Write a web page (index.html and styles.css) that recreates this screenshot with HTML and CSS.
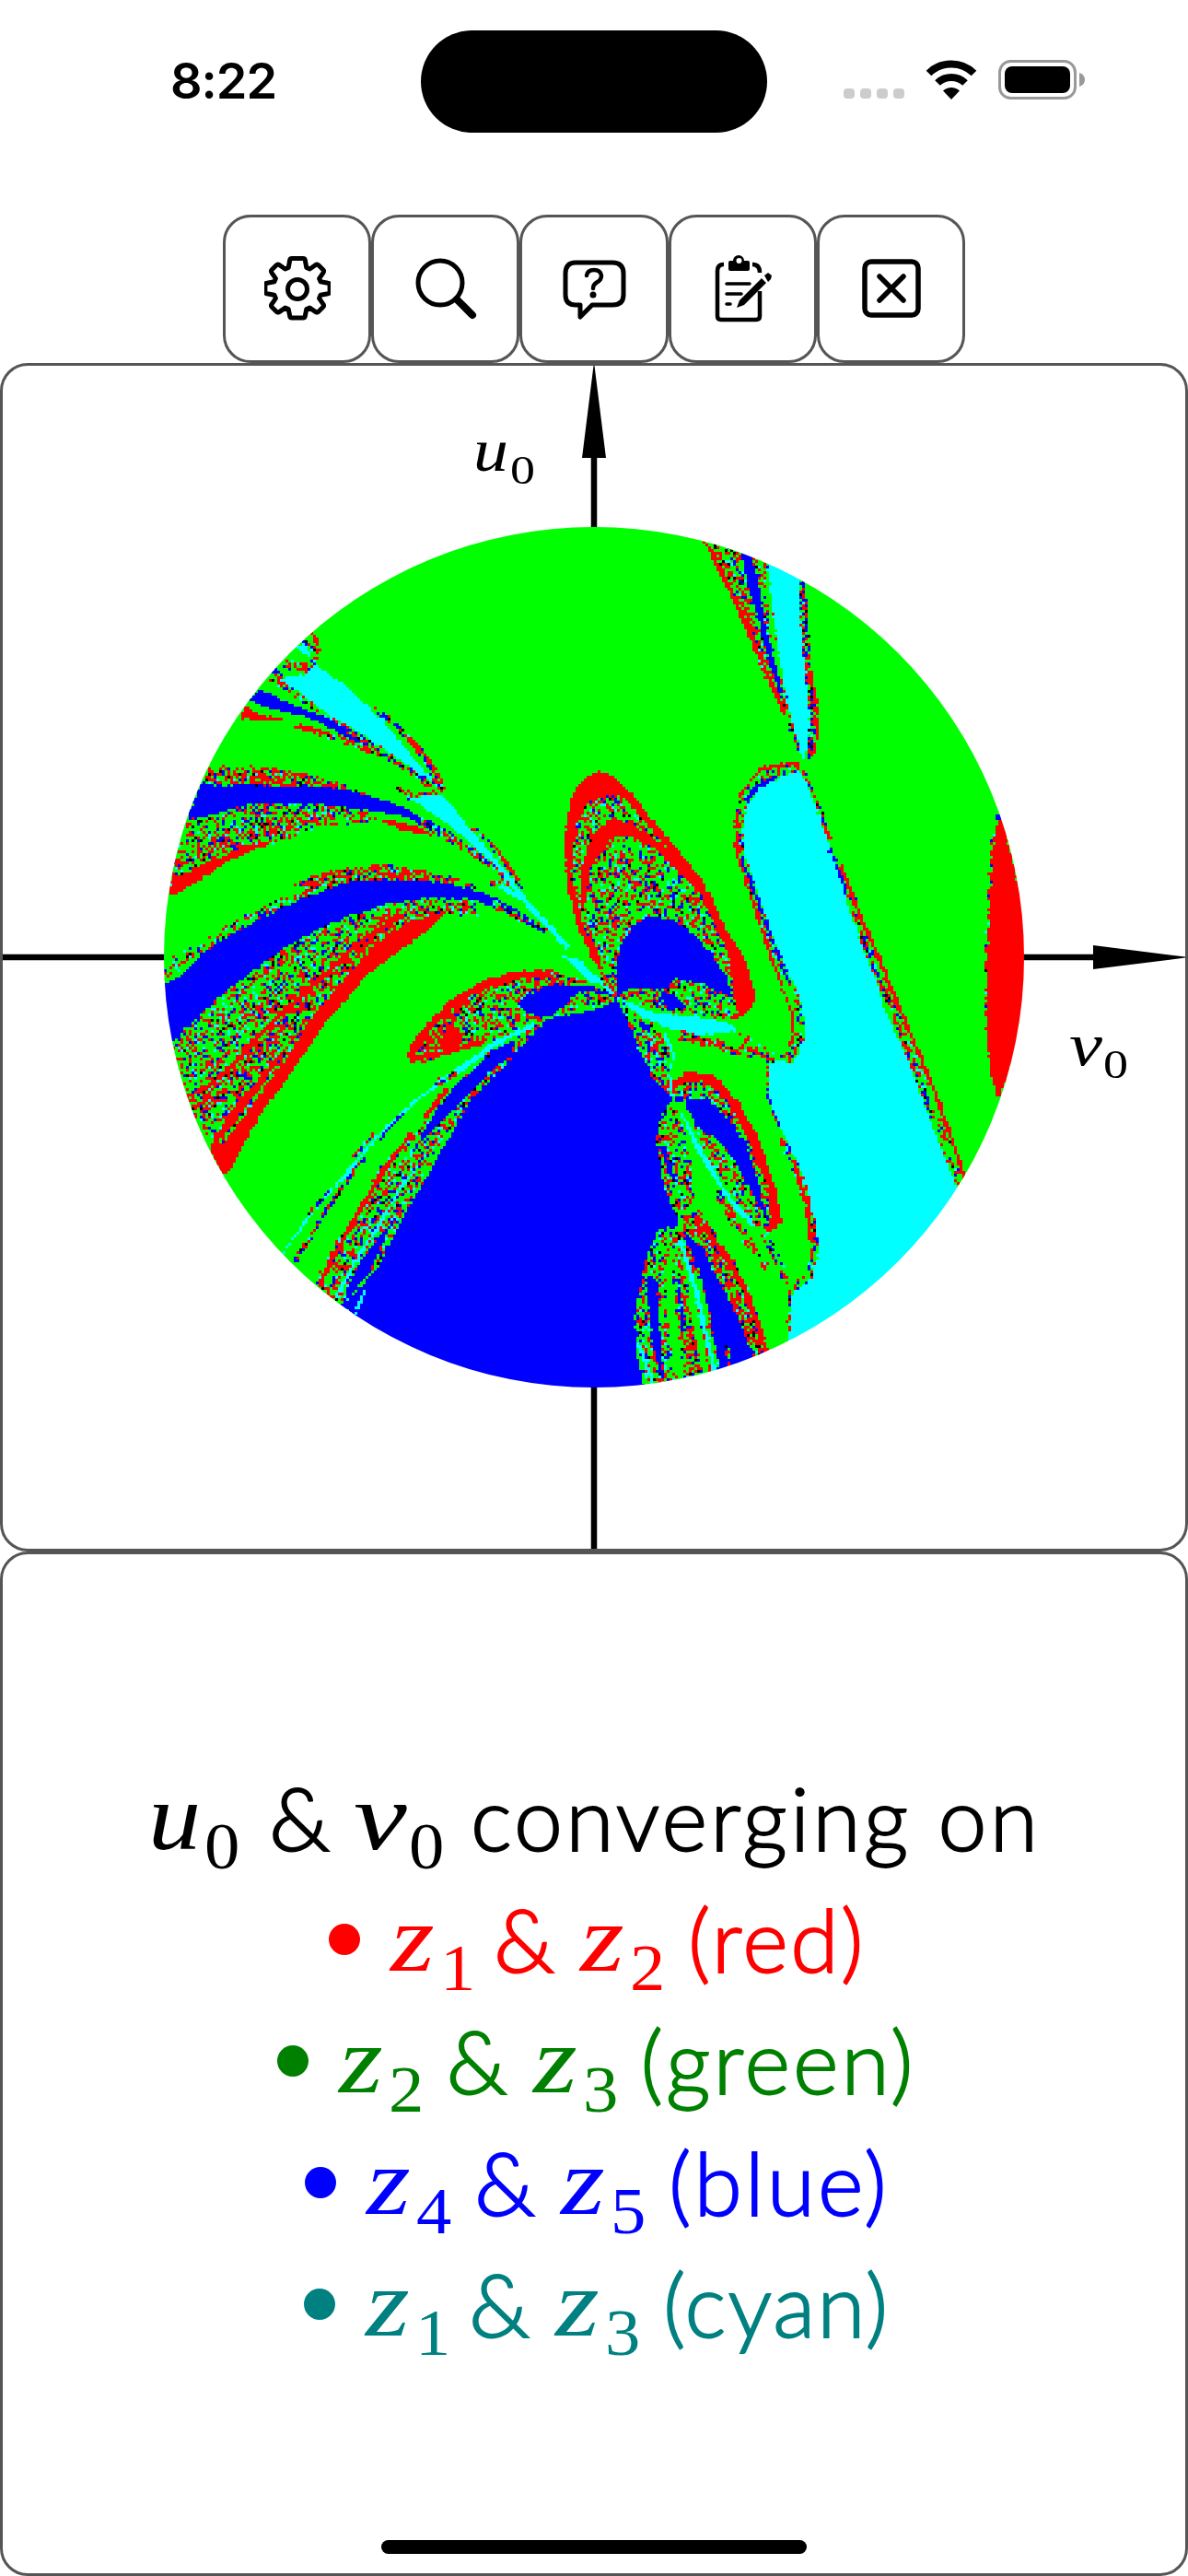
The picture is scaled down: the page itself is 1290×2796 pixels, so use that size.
FILE: index.html
```html
<!DOCTYPE html>
<html lang="en">

<head>
    <meta charset="utf-8">
    <title>Root convergence</title>
    <link rel="stylesheet" href="styles.css">
</head>

<body>
    <header class="status">
        <div class="time">8:22</div>
        <div class="island"></div>
        <div class="signals">
            <div class="dots"><i></i><i></i><i></i><i></i></div>
            <svg class="wifi" viewBox="0 0 58 43">
                <path d="M29 43l-9-9.500a13 13 0 0 1 18 0z" />
                <path d="M4.500 14.500a35 35 0 0 1 49 0M14 25a21.500 21.500 0 0 1 30 0" fill="none" stroke="#000" stroke-width="8" />
            </svg>
            <svg class="battery" viewBox="0 0 94 43">
                <rect x="1.500" y="1.500" width="82" height="40" rx="12" fill="none" stroke="#999" stroke-width="3" />
                <rect x="7" y="7" width="71" height="29" rx="8" />
                <path d="M88 14q6 2 6 7.500t-6 7.500z" fill="#999" />
            </svg>
        </div>
    </header>

    <nav class="toolbar">
        <button class="tool" aria-label="Settings">
            <svg viewBox="0 0 72 72" stroke-width="5">
                <path d="M30 3.500h12q2 0 2.300 2l1.500 8 3.500 1.500 6.500-4.500q1.700-1 3 .3l5 5q1.300 1.300.3 3l-4.500 6.500 1.500 3.500 8 1.500q2 .3 2 2v7.500q0 1.700-2 2l-8 1.500-1.500 3.500 4.500 6.500q1 1.700-.3 3l-5 5q-1.300 1.300-3 .3l-6.500-4.500-3.500 1.500-1.500 7.500q-.3 2-2.300 2H30q-2 0-2.300-2l-1.500-7.500-3.500-1.500-6.500 4.500q-1.700 1-3-.3l-5-5q-1.300-1.300-.3-3l4.500-6.500-1.500-3.500-8-1.500q-2-.3-2-2v-7.500q0-1.700 2-2l8-1.500 1.500-3.500-4.500-6.500q-1-1.700.3-3l5-5q1.300-1.300 3-.3l6.500 4.500 3.500-1.500 1.500-8q.3-2 2.300-2z" />
                <circle cx="36" cy="37" r="10.500" />
            </svg>
        </button>
        <button class="tool" aria-label="Search">
            <svg viewBox="0 0 72 72" stroke-width="5">
                <circle cx="30" cy="30" r="24" />
                <path d="M48 48l17 17" stroke-width="8" />
            </svg>
        </button>
        <button class="tool" aria-label="Help">
            <svg viewBox="0 0 72 72" stroke-width="5">
                <path d="M16 8h40q12 0 12 12v23q0 11-12 11H34L21 67V54h-5Q5 54 5 43V20Q5 8 16 8z" />
                <path d="M28 22q1-6 8-6t8 6q0 5-5 7.500-4 2.500-4 6.500" stroke-width="4.500" />
                <circle cx="35" cy="43" r="3.500" fill="#000" stroke="none" />
            </svg>
        </button>
        <button class="tool notes" aria-label="Notes">
            <svg viewBox="0 0 72 76" stroke-width="4.500">
                <path d="M19 12q-7 0-7 7v49q0 4 4 4h38q4 0 4-4V41M50 12q8 0 8 9" stroke-linecap="butt" />
                <path d="M24 10q0-2 2-2h3a6 6 0 0 1 12 0h4q2 0 2 2v7q0 2-2 2H26q-2 0-2-2z" fill="#000" stroke="none" />
                <circle cx="35.500" cy="8" r="3" fill="#fff" stroke="none" />
                <path d="M22 33h25M22 44h16M22 55h4" stroke-width="3.500" />
                <path d="M33 59l3-8 24-24 5 5-24 24zM63 24l4-3 4 3-1 4-3 3z" fill="#000" stroke="none" />
            </svg>
        </button>
        <button class="tool" aria-label="Close">
            <svg viewBox="0 0 72 72" stroke-width="5.500">
                <rect x="7" y="7" width="58" height="58" rx="7" />
                <path d="M23 23l26 26M49 23L23 49" />
            </svg>
        </button>
    </nav>

    <main>
        <section class="panel plot">
            <svg class="axes" viewBox="0 0 1284 1284">
                <path d="M642 90V1284M0 642h1200" stroke="#000" stroke-width="6.500" />
                <path d="M642-4l13 104h-26zM1288 642l-104 13v-26z" />
                <g class="axis-label">
                    <text x="511" y="114" textLength="38" lengthAdjust="spacingAndGlyphs">u</text>
                    <text class="index" x="551" y="128" textLength="27" lengthAdjust="spacingAndGlyphs">0</text>
                    <text x="1158" y="759" textLength="36" lengthAdjust="spacingAndGlyphs">v</text>
                    <text class="index" x="1195" y="773" textLength="27" lengthAdjust="spacingAndGlyphs">0</text>
                </g>
            </svg>
            <canvas id="disc" class="disc" width="934" height="934"></canvas>
        </section>

        <section class="panel legend">
            <div class="line">
                <div class="term wide"><i class="u">u</i><sub>0</sub></div>
                <div class="amp">&amp;</div>
                <div class="term wide"><i class="v">v</i><sub>0</sub></div>
                <div class="word converging">converging on</div>
            </div>
            <div class="line red">
                <div class="bullet"></div>
                <div class="term one"><i>z</i><sub>1</sub></div>
                <div class="amp">&amp;</div>
                <div class="term"><i>z</i><sub>2</sub></div>
                <div class="word w-red">(red)</div>
            </div>
            <div class="line green">
                <div class="bullet"></div>
                <div class="term"><i>z</i><sub>2</sub></div>
                <div class="amp">&amp;</div>
                <div class="term"><i>z</i><sub>3</sub></div>
                <div class="word w-green">(green)</div>
            </div>
            <div class="line blue">
                <div class="bullet"></div>
                <div class="term"><i>z</i><sub>4</sub></div>
                <div class="amp">&amp;</div>
                <div class="term"><i>z</i><sub>5</sub></div>
                <div class="word w-blue">(blue)</div>
            </div>
            <div class="line cyan">
                <div class="bullet"></div>
                <div class="term one"><i>z</i><sub>1</sub></div>
                <div class="amp">&amp;</div>
                <div class="term"><i>z</i><sub>3</sub></div>
                <div class="word w-cyan">(cyan)</div>
            </div>
            <div class="home"></div>
        </section>
    </main>

    <script src="basins.js"></script>
</body>

</html>
```
FILE: styles.css
```css
* {
    box-sizing: border-box;
}

body {
    margin: 0;
    width: 1290px;
    height: 2796px;
    overflow: hidden;
    display: flex;
    flex-direction: column;
    background: #fff;
    color: #000;
    font-family: Lato, "Open Sans", sans-serif;
}

.status {
    height: 233px;
    flex: none;
    display: flex;
    align-items: flex-start;
    padding-top: 33px;
}

.time {
    width: 457px;
    padding-left: 185px;
    padding-top: 22px;
    font: 600 54px/66px Inter, sans-serif;
    letter-spacing: -1px;
}

.island {
    width: 376px;
    height: 111px;
    border-radius: 56px;
    background: #000;
}

.signals {
    display: flex;
    padding: 32px 0 0 83px;
}

.dots {
    display: flex;
    gap: 6px;
    padding-top: 31px;
    width: 88px;
}

.dots i {
    width: 12px;
    height: 11px;
    border-radius: 4px;
    background: #ccc;
}

.wifi {
    width: 58px;
    height: 43px;
    margin-right: 22px;
}

.battery {
    width: 94px;
    height: 43px;
}

.toolbar {
    height: 161px;
    flex: none;
    display: flex;
    justify-content: center;
}

.tool {
    width: 161.25px;
    height: 161px;
    padding: 0 0 2px;
    display: flex;
    align-items: center;
    justify-content: center;
    background: #fff;
    border: 3px solid #555;
    border-radius: 30px;
}

.tool svg {
    width: 72px;
    height: 72px;
    fill: none;
    stroke: #000;
    stroke-linecap: round;
    stroke-linejoin: round;
}

.notes {
    padding-right: 7px;
}

.notes svg {
    height: 76px;
}

.panel {
    border: 3px solid #555;
    border-radius: 30px;
}

.plot {
    position: relative;
    height: 1290px;
}

.axes {
    display: block;
    width: 1284px;
    height: 1284px;
}

.axis-label {
    font: italic 65px "Liberation Serif", serif;
}

.axis-label .index {
    font-style: normal;
    font-size: 45px;
}

/* disc sits on top of the axes */
.disc {
    position: absolute;
    left: 175px;
    top: 175px;
    border-radius: 50%;
}

.legend {
    position: relative;
    height: 1112px;
    padding-bottom: 8px;
    display: flex;
    flex-direction: column;
    justify-content: center;
    align-items: center;
}

.line {
    display: flex;
    height: 132px;
    font-size: 95px;
    font-weight: 300;
    line-height: 132px;
    white-space: nowrap;
}

.bullet {
    width: 34px;
    height: 34px;
    margin: 50px 33px 0 0;
    border-radius: 50%;
    background: currentColor;
}

.term {
    width: 121px;
    display: flex;
    font-family: "Liberation Serif", serif;
    font-weight: 400;
}

.term.one {
    width: 116px;
}

.term.wide {
    width: 129px;
}

.term i {
    display: block;
    width: 54px;
    font-size: 104px;
    transform: scaleX(1.18);
    transform-origin: left;
}

.term i.u {
    width: 61px;
    margin-left: -6px;
    transform: scaleX(1.1);
}

.term i.v {
    width: 60px;
    margin-left: -2px;
    transform: scaleX(1.25);
}

.term sub {
    font-size: 71px;
    line-height: 132px;
    vertical-align: baseline;
    padding-top: 32px;
    transform: scaleX(1.08);
    transform-origin: left;
}

/* the light cut is too thin, the stroke brings it to a book weight */
.amp,
.word {
    text-indent: -4px;
    -webkit-text-stroke: 1.800px currentColor;
}

.amp {
    width: 90px;
}

.word {
    letter-spacing: 2.500px;
}

.converging {
    width: 608px;
    letter-spacing: 3.200px;
}

.w-red {
    width: 182px;
}

.w-green {
    width: 290px;
    letter-spacing: 3px;
}

.w-blue {
    width: 229px;
    letter-spacing: 3px;
}

.w-cyan {
    width: 236px;
    letter-spacing: 2px;
}

.red {
    color: #f00;
}

.green {
    color: #008000;
}

.blue {
    color: #00f;
}

.cyan {
    color: #008080;
}

.home {
    position: absolute;
    left: 411px;
    bottom: 21px;
    width: 462px;
    height: 15px;
    border-radius: 8px;
    background: #000;
}
```
FILE: basins.js
```javascript
const CELL = 3;
const SIZE = 934;
const canvas = document.getElementById('disc');
const ctx = canvas.getContext('2d');

const COLORS = { r: '#f00', g: '#0f0', b: '#00f', c: '#0ff', k: '#000' };

// mixes for the areas where the basins interleave, one letter per share
const MIXES = {
    n: 'gggggggggggggggrrrrrrrbbbcck',
    N: 'gggggggggrrrrrrrrrrrrbbck',
    e: 'ggggrrrrrbbbbbck'
};

// small seeded generator so that the disc always looks the same
let seed = 12345;
function rand() {
    seed = (seed * 1103515245 + 12345) % 2147483648;
    return (seed >>> 8) / 8388608;
}

function pick(kind) {
    const mix = MIXES[kind];
    return COLORS[mix ? mix[Math.floor(rand() * mix.length) % mix.length] : kind];
}

// tile: [origin x, origin y, units per px in x, units per px in y]
const NW = [-18, -12, 3, 3];
const SW = [-18, 428, 3, 3];
const NE = [422, -12, 2.958, 3];
const SE = [422, 428, 2.958, 3];

// [tile, kind, points] is filled, [tile, kind, points, width] is a line
const SHAPES = [
    // upper left
    [NW, 'c', '510,405 535,465 485,430'],
    [NW, 'r', '537,380 560,430 545,465', 10],
    [NW, 'e', '510,405 548,440 545,480 515,510', 10],
    [NW, 'N', '440,475 490,492 540,485', 26],
    [NW, 'b', '405,510 420,495 440,515 415,520'],
    [NW, 'n', '410,525 480,570 560,625 650,690 750,750 860,820 930,880', 30],
    [NW, 'c', '545,485 640,550 720,620 800,705 860,780 920,850 945,888 900,850 800,780 700,710 600,655 540,610 470,560 430,530 520,515'],
    [NW, 'b', '360,565 420,590 500,625 600,665 700,720 770,770 750,765 690,740 600,695 520,655 430,635 330,600'],
    [NW, 'e', '650,695 750,765 850,825 930,880', 16],
    [NW, 'r', '320,615 345,640 440,660 430,670 300,660'],
    [NW, 'r', '480,685 560,700', 14],
    [NW, 'N', '560,705 660,735 760,785', 18],
    [NW, 'e', '740,630 790,665 850,720 900,780 940,850 960,900', 18],
    [NW, 'r', '850,725 915,790 965,880 955,900', 9],
    [NW, 'N', '205,815 330,815 440,825 550,850 650,880 740,915 640,895 550,885 300,880 185,875'],
    [NW, 'n', '130,985 250,955 340,940 440,935 560,942 700,955 760,990 700,1005 560,1010 490,1040 400,1070 250,1130 140,1190 75,1210 100,1080'],
    [NW, 'N', '90,1140 200,1080 330,1040 480,995 620,990', 34],
    [NW, 'b', '180,865 230,880 300,872 440,880 560,880 650,892 740,915 820,945 900,985 1000,1040 900,1000 800,970 700,955 560,940 440,935 340,940 250,960 180,980 125,985'],
    [NW, 'r', '68,1240 80,1180 160,1145 240,1110 330,1070 430,1050 350,1085 240,1140 150,1200'],
    [NW, 'r', '740,985 860,1005 940,1035 920,1042 820,1020'],
    [NW, 'e', '880,985 960,1035 1060,1095 1140,1150 1190,1200', 24],
    [NW, 'N', '815,885 850,910 960,905', 22],
    [NW, 'c', '960,905 1000,955 1060,1030 1120,1100 1180,1170 1250,1265 1330,1350 1380,1410 1360,1400 1290,1330 1210,1240 1140,1150 1060,1070 980,1005 900,950 860,920'],
    [NW, 'e', '1060,1015 1130,1080 1190,1160 1220,1215', 12],
    [NW, 'r', '1145,1100 1205,1180', 9],
    [NW, 'c', '1150,1205 1220,1245 1290,1320 1370,1405', 15],

    // left fans
    [NW, 'N', '465,1200 560,1165 650,1145 780,1135 900,1155 1010,1180 1080,1215 1000,1195 900,1190 750,1195 600,1220'],
    [NW, 'n', '550,1225 430,1270 330,1320 200,1390 100,1450 60,1500', 42],
    [NW, 'n', '110,1680 220,1580 330,1490 440,1410 560,1345 660,1300 780,1265 900,1245 1060,1255 1090,1300 950,1300 860,1360 700,1500 600,1600 440,1760 330,1900 220,2070 130,1890 85,1725'],
    [NW, 'b', '440,1275 560,1225 660,1190 800,1185 940,1190 1060,1215 1150,1250 1210,1290 1280,1330 1180,1290 1060,1248 900,1245 780,1265 660,1300 560,1345 440,1410 330,1490 220,1580 110,1680 75,1720 50,1640 45,1530 110,1495 200,1410 300,1350'],
    [NW, 'e', '1120,1260 1200,1300 1300,1350', 20],
    [NW, 'N', '1120,1190 1150,1205', 20],
    [SW, 'r', '255,830 200,740 290,590 380,500 470,390 560,280 640,190 740,80 850,0 880,-30 980,-30 900,40 800,110 720,170 660,240 590,320 520,420 440,530 360,640 310,740'],
    [SW, 'N', '150,640 290,490 400,365 540,230 700,70 830,-20 950,-50', 48],
    [SW, 'r', '290,455 400,335 540,210 700,60 830,-20', 15],
    [SW, 'r', '120,580 200,535 300,445', 12],
    [SW, 'r', '215,740 300,600 410,465 560,310', 13],
    [SW, 'n', '240,720 340,590 440,450 540,300', 14],

    // leaf left of the centre
    [SW, 'N', '850,455 855,410 900,345 980,265 1060,215 1180,170 1300,160 1400,180 1440,200 1330,205 1230,240 1210,290 1290,320 1250,370 1140,390 1040,405 960,440 890,465'],
    [SW, 'n', '1010,380 1040,290 1180,210 1260,290 1200,360'],
    [SW, 'r', '855,445 880,385 990,270 1080,210 1200,175 1320,168', 22],
    [SW, 'r', '855,448 960,430 1100,390', 18],
    [SW, 'r', '950,395 990,330 1030,380 970,425'],

    // lower left fans
    [SW, 'n', '540,1180 600,1070 680,945 760,800 860,690 960,570 1090,420 1200,330 1290,310 1280,370 1180,460 1110,520 960,720 870,890 740,1140 640,1250'],
    [SW, 'g', '1000,490 1130,400 1010,530 860,700 840,660 930,570'],
    [SW, 'r', '560,1180 630,1050 700,930 770,810 860,690', 15],
    [SW, 'r', '900,640 975,550', 14],
    [SW, 'b', '1300,320 1400,300 1470,280 1530,250 1589,380 1655,510 1710,580 1670,640 1660,730 1685,870 1726,965 1731,990 1665,1010 1624,1100 1614,1180 1589,1280 1594,1400 1624,1530 1460,1550 1100,1500 850,1400 680,1290 632,1250 710,1180 770,1080 830,970 900,850 960,740 1050,590 1180,450 1270,350'],
    [SW, 'b', '1210,370 1180,440 1050,560 960,650 870,740 900,680 1000,540 1120,430'],
    [SW, 'b', '900,870 800,970 700,1100 650,1200 630,1250 700,1180 830,960'],
    [SW, 'n', '1020,615 940,730 880,860 780,1040 735,1140', 18],
    [SW, 'N', '1190,440 1120,490 1060,570', 12],
    [SW, 'c', '1260,335 1130,400 1010,490', 15],
    [SW, 'c', '1000,495 890,570 740,710 650,820 540,940 440,1085', 9],
    [SW, 'e', '1010,495 930,530', 16],
    [SW, 'b', '835,622 755,712', 9],
    [SW, 'e', '735,695 670,770', 12],
    [SW, 'e', '710,770 640,860 590,930 530,1030 475,1115', 13],
    [SW, 'e', '600,870 520,960', 9],
    [SW, 'c', '850,830 770,960 690,1090 610,1230', 9],
    [SW, 'c', '708,1205 675,1285', 9],

    // centre
    [SW, 'c', '1345,110 1410,125 1470,190 1530,240 1450,200'],
    [SW, 'n', '1320,310 1390,245 1450,200 1530,170 1540,250 1480,280'],
    [SW, 'b', '1210,270 1240,235 1330,205 1460,213 1400,235 1330,300 1290,315 1240,300'],
    [SW, 'b', '1400,215 1500,235', 8],
    [SW, 'c', '1400,140 1470,195 1530,245', 13],

    // red loop above the centre
    [NE, 'r', '145,830 100,855 60,920 45,1000 38,1100 50,1220 80,1330 120,1430 150,1480 205,1570 600,1640 655,1580 620,1450 560,1350 510,1240 460,1160 400,1085 330,1000 250,900 200,850'],
    [NE, 'n', '110,930 180,905 230,920 300,1000 370,1080 250,1000 190,985 130,1040 95,1120 85,1240 60,1180 75,1010'],
    [NE, 'n', '70,1180 115,1370', 10],
    [NE, 'n', '190,1050 240,1040 330,1085 420,1170 480,1240 530,1350 570,1440 580,1550 600,1640 400,1630 215,1570 160,1480 100,1280 120,1150'],
    [NE, 'b', '330,1305 390,1320 460,1370 520,1440 560,1500 575,1570 480,1520 390,1505 370,1540 250,1540 210,1560 205,1480 215,1400 260,1330'],
    [NE, 'b', '340,1540 400,1570 430,1600 370,1610'],
    [SE, 'g', '215,250 330,290 480,310 600,320 600,360 360,345'],
    [SE, 'N', '410,370 510,395 560,415 680,430', 32],
    [SE, 'c', '220,255 330,300 450,310 560,330 600,355 480,370 380,350 280,310'],
    [SE, 'n', '590,360 690,430', 24],

    // upper right wedge
    [NE, 'n', '485,80 600,110 690,150 700,250 720,430 745,560 800,780 740,650 690,530 640,400 570,250'],
    [NE, 'N', '510,100 600,270 660,420 700,530', 34],
    [NE, 'b', '605,110 640,125 665,240 690,380 720,500 745,600 700,500 660,330 630,240'],
    [NE, 'g', '690,190 705,380 735,520', 14],
    [NE, 'r', '495,90 570,240 640,400 700,540 750,650', 13],
    [NE, 'c', '695,150 800,200 790,280 805,400 820,540 828,700 805,800 775,690 740,540 720,400 700,250'],
    [NE, 'e', '800,210 808,320 815,440 830,560 838,680 825,790', 22],
    [NE, 'r', '815,480 845,590 850,720 835,780', 9],

    // cyan basin
    [NE, 'c', '790,820 820,880 860,990 900,1100 960,1270 1020,1440 1060,1590 1150,1790 1220,1990 1300,2190 1200,2360 760,2720 755,2560 800,2500 845,2400 830,2250 740,2030 695,1900 695,1770 760,1770 810,1680 780,1560 730,1440 680,1320 630,1180 610,1100 620,950 670,880 740,850'],
    [NE, 'c', '1290,2170 1310,2200 1100,2480 760,2720 900,2300'],
    [NE, 'n', '790,815 680,850 615,920 600,1000 605,1100 655,1260 705,1400 785,1570 800,1680 770,1765 700,1765', 25],
    [NE, 'r', '790,805 670,822 640,860 600,915', 10],
    [NE, 'r', '590,960 590,1090 650,1280 690,1400 770,1620 775,1690 750,1760', 9],
    [NE, 'b', '720,850 660,880 620,930', 14],
    [NE, 'b', '610,1120 650,1230 700,1370 760,1520', 8],
    [NE, 'e', '800,820 860,960 880,1030', 10],
    [NE, 'b', '890,1085 930,1180 955,1270', 10],
    [NE, 'n', '950,1230 1010,1400 1090,1600 1190,1850 1310,2175', 30],
    [NE, 'r', '865,1000 895,1055', 10],
    [NE, 'r', '925,1140 1000,1330 1060,1470 1130,1640 1230,1880 1325,2155', 12],
    [NE, 'e', '970,1300 1070,1570 1150,1780 1210,1920', 9],
    [SE, 'e', '695,440 690,570 740,700', 8],
    [SE, 'n', '735,700 800,850 830,980 845,1060 825,1150 775,1190', 24],
    [SE, 'r', '775,790 820,930 825,1040', 13],
    [SE, 'e', '840,960 840,1080 810,1180', 9],
    [SE, 'e', '765,1190 755,1350', 8],

    // right edge
    [NE, 'r', '1440,960 1540,1400 1530,1640 1430,1910 1405,1800 1390,1650 1395,1350 1405,1200 1415,1050'],
    [NE, 'b', '1420,970 1440,970 1445,990 1422,992'],
    [NE, 'n', '1415,1030 1405,1180 1395,1350 1390,1660', 9],

    // loops below the centre
    [SE, 'n', '215,250 270,310 350,350 390,430 390,580 330,520 265,390'],
    [SE, 'g', '365,370 400,360 420,490 390,530'],
    [SE, 'b', '280,330 320,360', 16],
    [SE, 'c', '355,360 390,430 375,500 385,570', 8],
    [SE, 'r', '390,520 430,490 520,500 600,590 660,700 720,880 740,980 700,1010 640,980 600,920 450,640 390,580'],
    [SE, 'n', '400,530 480,520 560,580 620,690 690,860 700,1000 620,960 390,590'],
    [SE, 'b', '395,575 500,580 560,640 620,720 660,850 695,980 650,900 590,790 540,720 450,660'],
    [SE, 'n', '520,720 580,810 650,930', 28],
    [SE, 'g', '410,590 480,770 530,890', 32],
    [SE, 'c', '400,600 425,640 480,740 560,880 670,1010 600,960 520,840 460,740'],
    [SE, 'N', '530,880 590,990 690,1130', 26],
    [SE, 'n', '680,1020 720,1100 760,1180', 24],
    [SE, 'n', '385,590 345,640 335,730 360,870 410,990 460,880 450,800 410,640'],
    [SE, 'b', '350,730 390,840', 14],
    [SE, 'N', '425,950 470,940 520,1010 580,1100 640,1220 690,1410 480,1480 300,1520 265,1280 300,1100 340,1010 410,990'],
    [SE, 'n', '340,1010 410,990 430,1480 300,1520 265,1280 300,1100'],
    [SE, 'b', '420,1010 480,1060 550,1200 600,1300 650,1430 540,1470 500,1280 460,1120'],
    [SE, 'b', '300,1150 335,1170 345,1330 355,1500 320,1380'],
    [SE, 'g', '370,1120 385,1300 410,1490', 28],
    [SE, 'g', '425,1090 460,1290 490,1470', 22],
    [SE, 'b', '400,1150 420,1330', 10],
    [SE, 'n', '460,1130 500,1290', 18],
    [SE, 'c', '410,1040 460,1200 525,1480', 15],
    [SE, 'g', '455,1120 530,1460', 7],
    [SE, 'r', '465,960 560,1100 620,1200 690,1410', 15],
    [SE, 'e', '555,1370 570,1450', 12],
    [SE, 'c', '275,1370 325,1510', 10]
];

function paint(tile, kind, text, width) {
    const points = text.split(' ').map(p => {
        const [x, y] = p.split(',').map(Number);
        return [tile[0] + x / tile[2], tile[1] + y / tile[3]];
    });
    const path = new Path2D();
    points.forEach(([x, y]) => path.lineTo(x, y));
    if (!width) path.closePath();
    ctx.lineWidth = width ? width / 3 : 1;

    const pad = ctx.lineWidth;
    const xs = points.map(p => p[0]);
    const ys = points.map(p => p[1]);
    const left = Math.floor((Math.min(...xs) - pad) / CELL) * CELL;
    const top = Math.floor((Math.min(...ys) - pad) / CELL) * CELL;
    const right = Math.max(...xs) + pad;
    const bottom = Math.max(...ys) + pad;

    for (let y = top; y < bottom; y += CELL) {
        for (let x = left; x < right; x += CELL) {
            // a little jitter gives the ragged borders
            const px = x + 1.5 + (rand() - 0.5) * 2;
            const py = y + 1.5 + (rand() - 0.5) * 2;
            const inside = width ? ctx.isPointInStroke(path, px, py) : ctx.isPointInPath(path, px, py);
            if (!inside) continue;
            ctx.fillStyle = pick(kind);
            ctx.fillRect(x, y, CELL, CELL);
        }
    }
}

ctx.fillStyle = COLORS.g;
ctx.fillRect(0, 0, SIZE, SIZE);
SHAPES.forEach(shape => paint(...shape));
```
